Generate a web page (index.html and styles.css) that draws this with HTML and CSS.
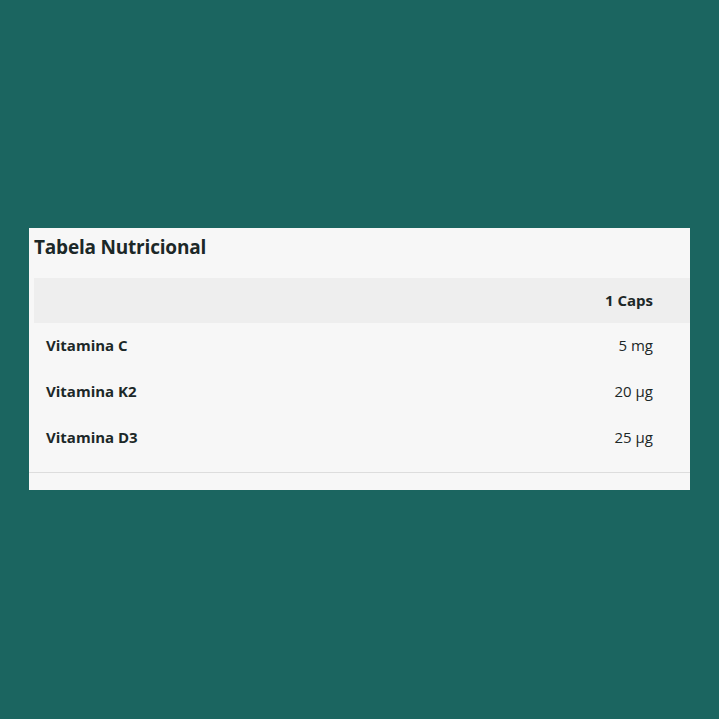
FILE: index.html
```html
<!DOCTYPE html>
<html lang="pt">
<head>
<meta charset="utf-8">
<link rel="stylesheet" href="styles.css">
</head>
<body>
<div class="page">
  <section class="card">
    <h2 class="title">Tabela Nutricional</h2>
    <table class="nutri">
      <thead>
        <tr><th class="label"></th><th class="value">1 Caps</th></tr>
      </thead>
      <tbody>
        <tr><td class="label">Vitamina C</td><td class="value">5 mg</td></tr>
        <tr><td class="label">Vitamina K2</td><td class="value">20 µg</td></tr>
        <tr><td class="label">Vitamina D3</td><td class="value">25 µg</td></tr>
      </tbody>
    </table>
    <div class="rule"></div>
  </section>
</div>
</body>
</html>
```
FILE: styles.css
```css
html, body {
  margin: 0;
  padding: 0;
  background: #1b6560;
  font-family: "Open Sans", "Noto Sans", sans-serif;
}
.page {
  width: 719px;
  height: 719px;
  display: flex;
  flex-direction: column;
  padding: 228px 29px 0 29px;
  box-sizing: border-box;
}
.card {
  background: #f7f7f7;
  padding: 6px 0 17px 0;
}
.title {
  margin: 0 0 17px 5px;
  font-size: 19px;
  line-height: 27px;
  letter-spacing: -0.2px;
  font-weight: 700;
  color: #1c2828;
}
.nutri {
  margin-left: 5px;
  width: 656px;
  border-collapse: collapse;
  font-size: 15px;
  color: #1c2828;
}
.nutri th, .nutri td {
  padding: 11px 12px 13px 12px;
  line-height: 22px;
  height: 22px;
}
.nutri thead tr {
  background: #eeeeee;
}
.nutri th {
  font-weight: 700;
  padding-top: 11px;
  padding-bottom: 12px;
}
.nutri .label {
  text-align: left;
  font-weight: 700;
}
.nutri .value {
  text-align: right;
  padding-right: 37px;
}
.nutri td.value {
  font-weight: 400;
}
.rule {
  margin-top: 11px;
  border-top: 1px solid #dddddd;
}
```
